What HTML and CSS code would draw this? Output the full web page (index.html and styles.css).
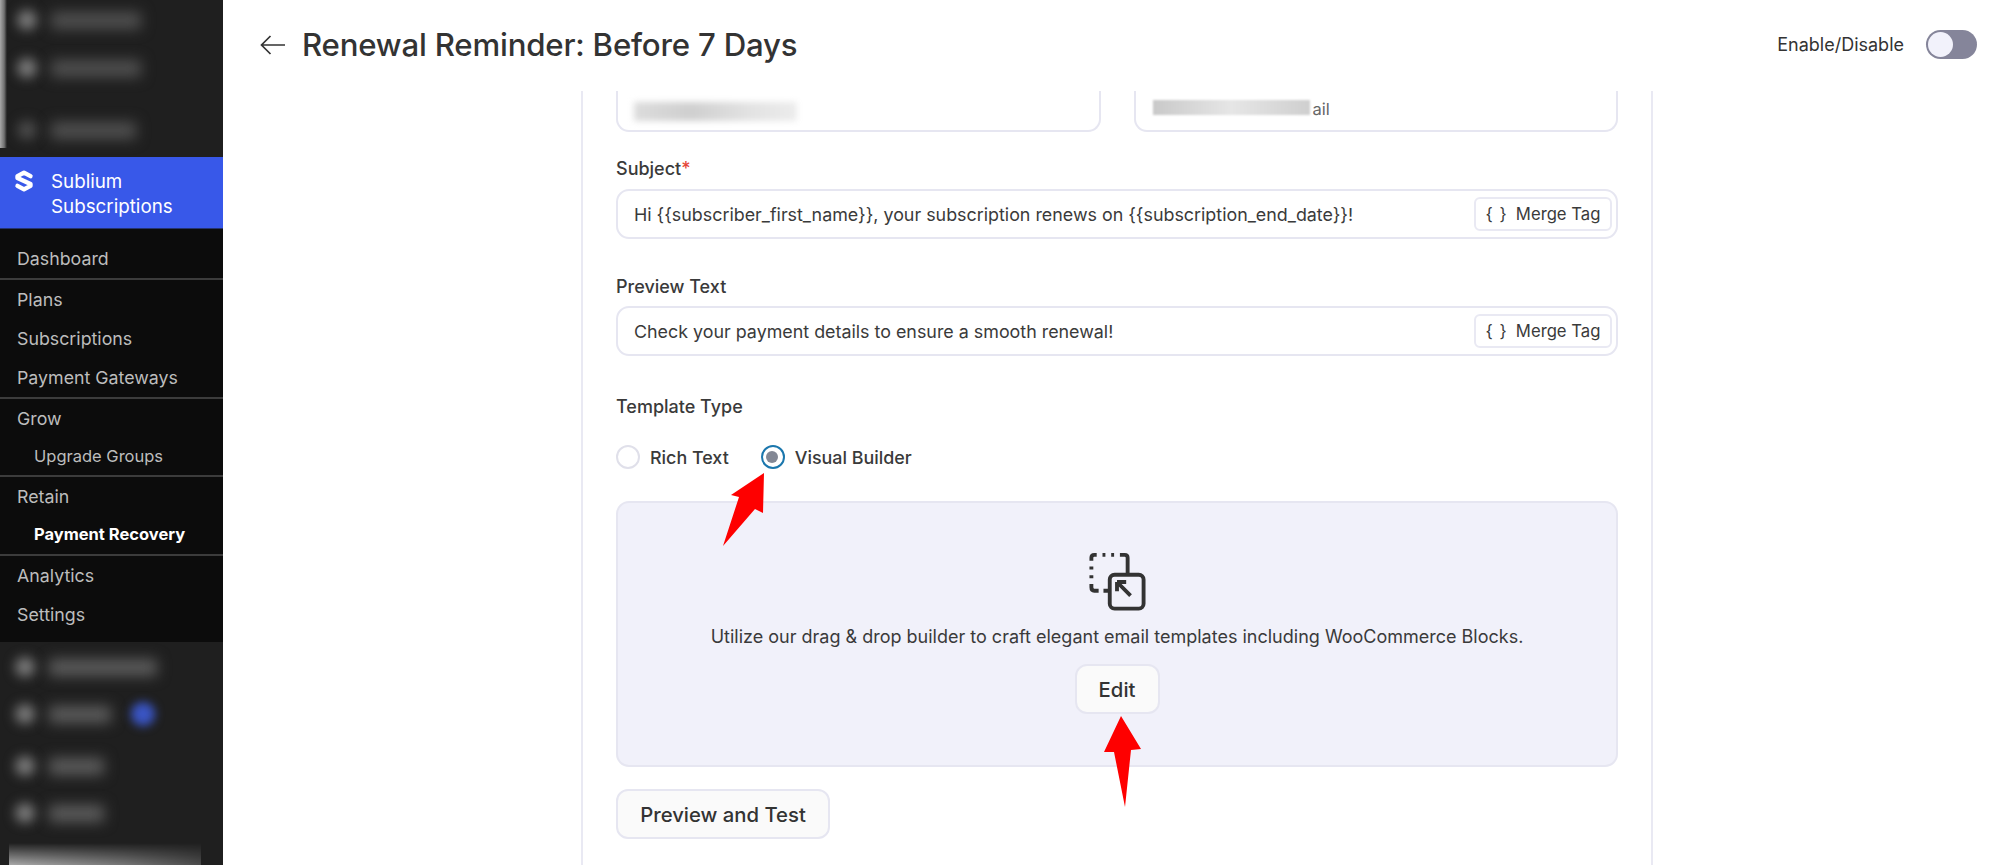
FILE: index.html
```html
<!DOCTYPE html>
<html lang="en">
<head>
<meta charset="utf-8">
<title>Renewal Reminder</title>
<link rel="stylesheet" href="styles.css">
</head>
<body>
<div class="app">
  <aside class="sidebar">
    <div class="blur-top">
      <div class="blur-row"><i class="b-icon"></i><i class="b-text w90"></i></div>
      <div class="blur-row"><i class="b-icon"></i><i class="b-text w90"></i></div>
      <div class="blur-row lower"><i class="b-icon dim"></i><i class="b-text w85"></i></div>
    </div>
    <div class="brand">
      <svg class="brand-logo" viewBox="0 0 20 22" width="20" height="22" aria-hidden="true"><path d="M16.5 6.2 10 2.6 3.5 6.2V8L16.5 14V15.8L10 19.4 3.5 15.8" fill="none" stroke="#fff" stroke-width="4.4" stroke-linejoin="round" stroke-linecap="round"/></svg>
      <span class="brand-name">Sublium Subscriptions</span>
    </div>
    <nav class="nav">
      <div class="nav-group first"><a>Dashboard</a></div>
      <div class="nav-group"><a>Plans</a><a>Subscriptions</a><a>Payment Gateways</a></div>
      <div class="nav-group"><a>Grow</a><a class="sub">Upgrade Groups</a></div>
      <div class="nav-group"><a>Retain</a><a class="sub active">Payment Recovery</a></div>
      <div class="nav-group"><a>Analytics</a><a>Settings</a></div>
    </nav>
    <div class="blur-bottom">
      <div class="blur-row"><i class="b-icon"></i><i class="b-text w110"></i></div>
      <div class="blur-row"><i class="b-icon"></i><i class="b-text w65"></i><i class="b-badge"></i></div>
      <div class="blur-row lower-2"><i class="b-icon"></i><i class="b-text w55"></i></div>
      <div class="blur-row"><i class="b-icon"></i><i class="b-text w55"></i></div>
      <div class="bright"></div>
    </div>
  </aside>
  <main class="main">
    <header class="topbar">
      <div class="title-wrap">
        <svg class="back" viewBox="0 0 26 20" width="26" height="20" aria-hidden="true"><path d="M25 10H1.5M10.5 1 1.5 10l9 9" fill="none" stroke="#333" stroke-width="1.7"/></svg>
        <h1 class="title">Renewal Reminder: Before 7 Days</h1>
      </div>
      <div class="toggle-wrap">
        <span class="toggle-label">Enable/Disable</span>
        <span class="toggle"><span class="knob"></span></span>
      </div>
    </header>
    <section class="panel">
      <div class="top-row">
        <div class="cut-input"><span class="smudge s1"></span></div>
        <div class="cut-input"><span class="reply">ail</span><span class="smudge s2"></span></div>
      </div>
      <label class="label first-label">Subject<span class="req">*</span></label>
      <div class="input">
        <span>Hi {{subscriber_first_name}}, your subscription renews on {{subscription_end_date}}!</span>
        <button class="merge"><span class="braces">{ }</span>Merge Tag</button>
      </div>
      <label class="label second-label">Preview Text</label>
      <div class="input">
        <span>Check your payment details to ensure a smooth renewal!</span>
        <button class="merge"><span class="braces">{ }</span>Merge Tag</button>
      </div>
      <label class="label third-label">Template Type</label>
      <div class="radios">
        <span class="radio"></span><span class="radio-text">Rich Text</span>
        <span class="radio on"></span><span class="radio-text">Visual Builder</span>
      </div>
      <div class="builder">
        <svg class="builder-icon" viewBox="0 0 60 60" width="58" height="58" aria-hidden="true">
          <rect x="22.5" y="22.5" width="35" height="35" rx="5" fill="none" stroke="#333" stroke-width="4"/>
          <path d="M41 22V5Q41 2 38 2H33M27 2H24M18 2H15M9 2H6.5Q3.5 2 3.5 5V8M3.5 14V17M3.5 23V26M3.5 32V35.5Q3.5 39 6.5 39H11M16 39H22" fill="none" stroke="#333" stroke-width="4"/>
          <path d="M30 30V39.5M30 30H39.5M30 30 44 44" fill="none" stroke="#333" stroke-width="4"/>
        </svg>
        <p class="builder-text">Utilize our drag &amp; drop builder to craft elegant email templates including WooCommerce Blocks.</p>
        <button class="btn edit">Edit</button>
      </div>
      <button class="btn preview">Preview and Test</button>
    </section>
  </main>
</div>
<svg class="arrows" width="1999" height="865" viewBox="0 0 1999 865" aria-hidden="true">
  <path d="M764 473 731 495 739 497 723 546 755 509 763 513Z" fill="#fe0000"/>
  <path d="M1121 716 1141 749 1131 750 1125 807 1114 752 1104 752Z" fill="#fe0000"/>
</svg>
</body>
</html>
```

FILE: styles.css
```css
* { box-sizing: border-box; }
html, body { margin: 0; height: 100%; overflow: hidden; background: #fff; }
body { font-family: Inter, "Noto Sans", "Liberation Sans", sans-serif; color: #3a3a3a; }
.app { display: flex; height: 865px; position: relative; }

.sidebar { width: 223px; flex: none; background: #0c0c0c; display: flex; flex-direction: column; overflow: hidden; }
.blur-top { height: 157px; background: #1f1f1f; padding-top: 8px; display: flex; flex-direction: column; gap: 24px; overflow: hidden; position: relative; }
.blur-top::before { content: ""; position: absolute; left: 0; top: 0; width: 7px; height: 148px; background: linear-gradient(90deg, #a8a8a8, #707070 60%, #1f1f1f); }
.blur-row { height: 24px; display: flex; align-items: center; gap: 14px; padding-left: 17px; flex: none; }
.blur-row.lower { margin-top: 14px; }
.blur-row.lower-2 { margin-top: 5px; }
.b-icon { width: 20px; height: 20px; background: #7c7c7c; border-radius: 50%; filter: blur(6px); flex: none; }
.b-icon.dim { background: #4a4a4a; }
.b-text { height: 17px; background: #5c5c5c; filter: blur(7px); flex: none; }
.blur-top .b-text { background: #505050; }
.w90 { width: 90px; } .w85 { width: 85px; } .w110 { width: 108px; } .w65 { width: 62px; } .w55 { width: 55px; }
.b-badge { width: 24px; height: 24px; margin-left: 6px; background: #3a55c4; border-radius: 50%; filter: blur(5px); flex: none; }

.brand { height: 72px; background: #3858e9; padding: 12px 10px 0 14px; display: flex; gap: 17px; border-bottom: 1px solid #25336f; flex: none; }
.brand-logo { margin-top: 1px; flex: none; }
.brand-name { color: #fff; font-size: 18.8px; line-height: 25px; width: 150px; }

.nav { height: 413px; flex: none; padding-top: 9.5px; }
.nav-group { border-top: 2px solid #3c3c3c; }
.nav-group.first { border-top: 0; }
.nav-group a { display: block; color: #bdbdbd; font-size: 17.8px; line-height: 39px; padding-left: 17px; white-space: nowrap; }
.nav-group a.sub { font-size: 16.5px; padding-left: 34px; line-height: 37.5px; }
.nav-group a.active { color: #fff; font-weight: 700; }

.blur-bottom { flex: 1; background: #1f1f1f; padding-top: 13px; display: flex; flex-direction: column; gap: 23px; overflow: hidden; }
.blur-bottom .blur-row { padding-left: 15px; }
.bright { flex: none; margin: -5px 0 0 9px; width: 192px; height: 30px; background: linear-gradient(90deg, #c8c8c8, #8a8a8a 60%, #555); -webkit-mask-image: linear-gradient(180deg, transparent, #000 90%); mask-image: linear-gradient(180deg, transparent, #000 90%); }

.main { flex: 1; min-width: 0; display: flex; flex-direction: column; }
.topbar { height: 91px; flex: none; display: flex; justify-content: space-between; align-items: center; padding: 0 22px 2px 37px; }
.title-wrap { display: flex; align-items: center; gap: 16px; }
.back { flex: none; }
.title { margin: 0; font-size: 31.2px; font-weight: 500; color: #333; letter-spacing: -0.2px; white-space: nowrap; }
.toggle-wrap { display: flex; align-items: center; gap: 22px; }
.toggle-label { font-size: 18px; color: #333; }
.toggle { width: 51px; height: 29px; border-radius: 15px; background: #85859a; padding: 2px; display: block; }
.knob { display: block; width: 25px; height: 25px; border-radius: 50%; background: #f2f2fb; }

.panel { flex: 1; width: 1072px; margin-left: 358px; padding: 0 33px; border-left: 2px solid #e9e9f3; border-right: 2px solid #e9e9f3; overflow: hidden; }
.top-row { display: flex; gap: 33px; }
.cut-input { flex: 1; height: 41px; border: 2px solid #e6e6f1; border-top: 0; border-radius: 0 0 13px 13px; position: relative; }
.smudge { position: absolute; }
.s1 { left: 16px; top: 11px; width: 163px; height: 19px; background: linear-gradient(90deg, #dcdcdc, #cfcfcf 35%, #e2e2e2 70%, #ececec); filter: blur(3px); }
.s2 { left: 17px; top: 9px; width: 157px; height: 15px; background: linear-gradient(90deg, #c9c9c9, #e6e6e6 50%, #cfcfcf); filter: blur(1px); }
.reply { position: absolute; left: 177px; top: 8px; font-size: 16.5px; color: #666; }

.label { display: block; font-size: 18px; line-height: 22px; color: #3a3a3a; font-weight: 500; }
.first-label { margin-top: 26px; margin-bottom: 9px; }
.second-label { margin-top: 37px; margin-bottom: 8px; }
.third-label { margin-top: 40px; }
.req { color: #e5483a; }
.input { height: 50px; border: 2px solid #e6e6f1; border-radius: 13px; display: flex; align-items: center; justify-content: space-between; padding: 0 4px 0 16px; font-size: 17.88px; color: #3a3a3a; }
.merge { height: 34px; width: 138px; border: 2px solid #e9e9f3; border-radius: 6px; background: #fff; font: inherit; font-size: 16.7px; color: #3a3a3a; padding: 0; display: flex; align-items: center; justify-content: center; gap: 8px; }
.braces { letter-spacing: 1px; font-size: 17px; }

.radios { display: flex; align-items: center; margin-top: 26px; height: 26px; font-size: 17.9px; font-weight: 500; }
.radio { width: 24px; height: 24px; border-radius: 50%; border: 2.5px solid #e0e0ea; display: block; flex: none; background: #fff; }
.radio-text { margin-left: 10px; margin-right: 32px; white-space: nowrap; }
.radio.on { border: 2.5px solid #1b77ad; position: relative; }
.radio.on::after { content: ""; position: absolute; left: 3.5px; top: 3.5px; width: 12px; height: 12px; border-radius: 50%; background: #838895; }

.builder { height: 266px; margin-top: 31px; background: #f1f1fa; border: 2px solid #e6e6f1; border-radius: 13px; display: flex; flex-direction: column; align-items: center; padding-top: 50px; }
.builder-icon { flex: none; }
.builder-text { margin: 14px 0 0; font-size: 18px; line-height: 24px; color: #3a3a3a; white-space: nowrap; }
.btn { background: #fafafa; border: 2px solid #e6e6f1; border-radius: 12px; font: inherit; font-weight: 500; font-size: 20.3px; color: #333; padding: 0; }
.edit { width: 85px; height: 50px; margin-top: 15px; }
.preview { width: 214px; height: 50px; margin-top: 22px; display: block; }

.arrows { position: absolute; left: 0; top: 0; pointer-events: none; }
```
